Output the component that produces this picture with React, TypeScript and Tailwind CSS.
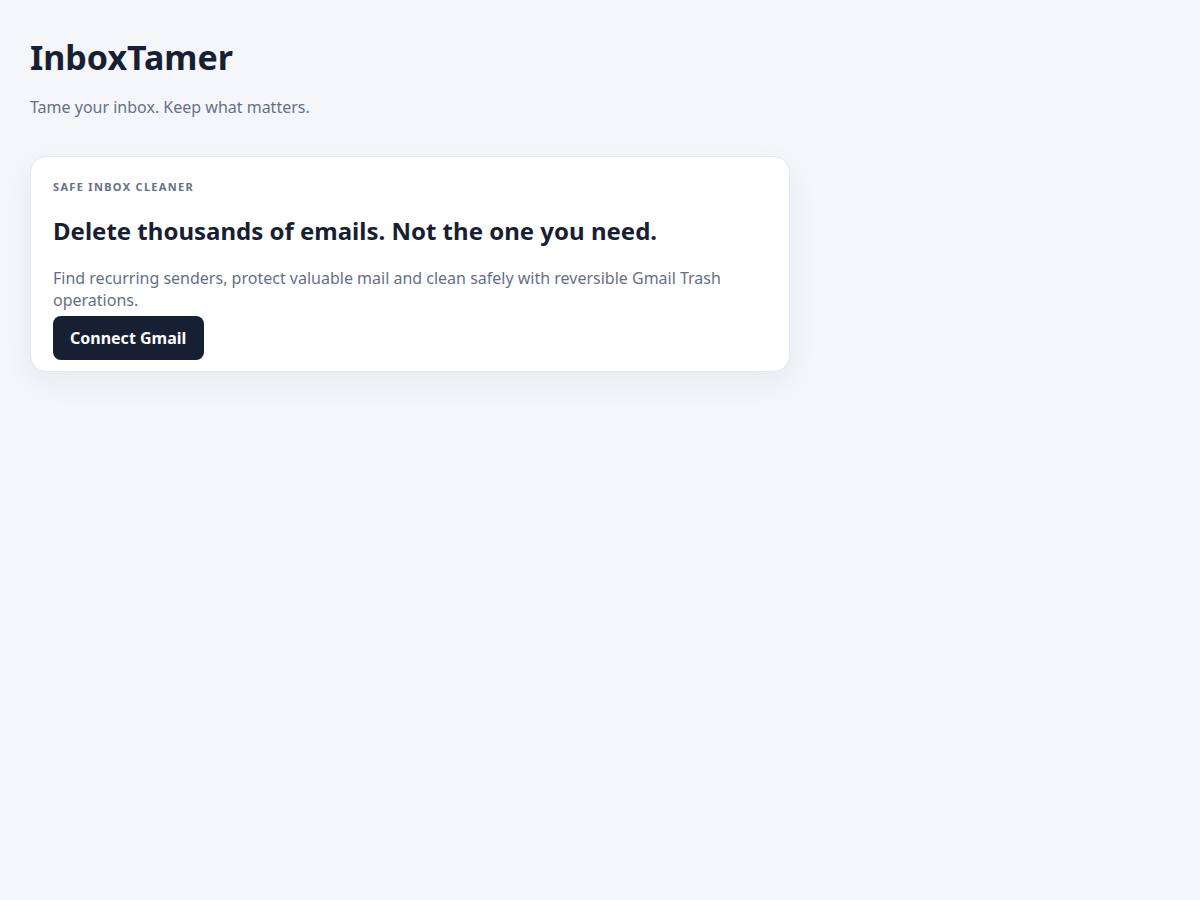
export default function App() {
  return (
    <div className="min-h-screen bg-[#f5f6fa] font-['Noto_Sans',sans-serif] text-[#172033]">
      <main className="px-[30px] pt-[37px]">
        <h1 className="text-[34px] font-bold leading-[1.2]">InboxTamer</h1>
        <p className="mt-[18px] text-base leading-[22px] text-[#667085]">Tame your inbox. Keep what matters.</p>

        <section className="mt-[38px] w-[760px] rounded-2xl border border-[#e4e7ee] bg-white px-[22px] pt-[22px] pb-[11px] shadow-[0_10px_30px_rgba(23,32,51,0.06)]">
          <div className="text-[11px] font-bold uppercase leading-4 tracking-[0.12em] text-[#667085]">Safe inbox cleaner</div>
          <h2 className="mt-[20px] text-2xl font-bold leading-[32px]">
            Delete thousands of emails. Not the one you need.
          </h2>
          <p className="mt-[20px] text-base leading-[22px] text-[#667085]">
            Find recurring senders, protect valuable mail and clean safely with reversible Gmail Trash operations.
          </p>
          <button
            type="button"
            className="mt-[5px] rounded-lg bg-[#172033] pl-[17px] pr-[18px] py-[10px] text-base font-bold leading-6 text-white"
          >
            Connect Gmail
          </button>
        </section>
      </main>
    </div>
  );
}
